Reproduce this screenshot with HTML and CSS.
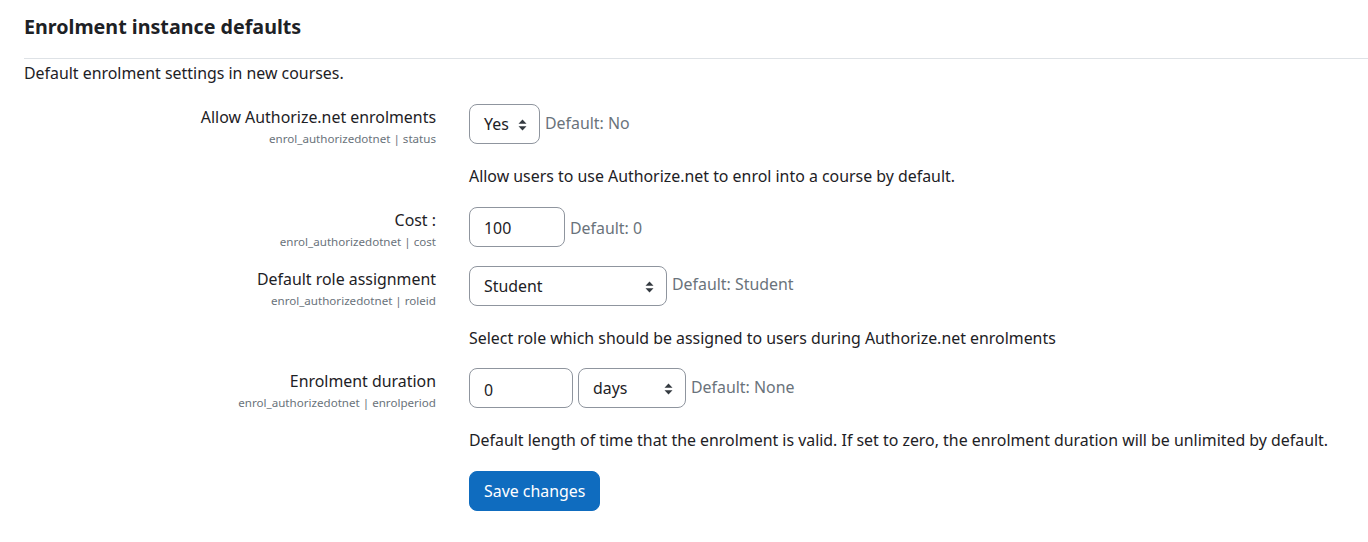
FILE: index.html
```html
<!DOCTYPE html>
<html lang="en">
<head>
    <meta charset="UTF-8">
    <meta name="viewport" content="width=device-width, initial-scale=1.0">
    <title>Enrolment instance defaults</title>
    <link rel="stylesheet" href="styles.css">
</head>
<body>

    <h3 class="section-title">Enrolment instance defaults</h3>
    <div class="section-info">Default enrolment settings in new courses.</div>

    <form class="settings">
        <div class="setting">
            <div class="setting-label">
                <label>Allow Authorize.net enrolments</label>
                <span class="setting-name">enrol_authorizedotnet | status</span>
            </div>
            <div class="setting-body">
                <div class="controls">
                    <div class="custom-select w-yes">Yes
                        <svg class="arrows" width="9" height="12" viewBox="0 0 9 12"><path d="M4.5 0.5 L8.5 4.8 H0.5 Z M4.5 11.5 L8.5 7.2 H0.5 Z" fill="#343a40"/></svg>
                    </div>
                    <span class="default-info after-select">Default: No</span>
                </div>
                <div class="setting-desc">Allow users to use Authorize.net to enrol into a course by default.</div>
            </div>
        </div>

        <div class="setting">
            <div class="setting-label">
                <label>Cost :</label>
                <span class="setting-name">enrol_authorizedotnet | cost</span>
            </div>
            <div class="setting-body">
                <div class="controls">
                    <div class="text-input w-cost">100</div>
                    <span class="default-info after-input">Default: 0</span>
                </div>
            </div>
        </div>

        <div class="setting">
            <div class="setting-label">
                <label>Default role assignment</label>
                <span class="setting-name">enrol_authorizedotnet | roleid</span>
            </div>
            <div class="setting-body">
                <div class="controls">
                    <div class="custom-select w-role">Student
                        <svg class="arrows" width="9" height="12" viewBox="0 0 9 12"><path d="M4.5 0.5 L8.5 4.8 H0.5 Z M4.5 11.5 L8.5 7.2 H0.5 Z" fill="#343a40"/></svg>
                    </div>
                    <span class="default-info after-select">Default: Student</span>
                </div>
                <div class="setting-desc">Select role which should be assigned to users during Authorize.net enrolments</div>
            </div>
        </div>

        <div class="setting">
            <div class="setting-label">
                <label>Enrolment duration</label>
                <span class="setting-name">enrol_authorizedotnet | enrolperiod</span>
            </div>
            <div class="setting-body">
                <div class="controls">
                    <div class="text-input w-period">0</div>
                    <div class="custom-select w-unit">days
                        <svg class="arrows" width="9" height="12" viewBox="0 0 9 12"><path d="M4.5 0.5 L8.5 4.8 H0.5 Z M4.5 11.5 L8.5 7.2 H0.5 Z" fill="#343a40"/></svg>
                    </div>
                    <span class="default-info after-select">Default: None</span>
                </div>
                <div class="setting-desc">Default length of time that the enrolment is valid. If set to zero, the enrolment duration will be unlimited by default.</div>
            </div>
        </div>

        <div class="setting">
            <div class="setting-label"></div>
            <div class="setting-body">
                <button type="button" class="btn-primary">Save changes</button>
            </div>
        </div>
    </form>

</body>
</html>
```

FILE: styles.css
```css
body {
    margin: 0;
    padding: 0 0 0 24px;
    font-family: "Noto Sans", "Open Sans", sans-serif;
    font-size: 15.9px;
    line-height: 22px;
    color: #1d2125;
    background: #fff;
}
.section-title {
    font-size: 19.7px;
    font-weight: 700;
    line-height: 26px;
    margin: 0;
    padding: 14px 0 18px;
    border-bottom: 1px solid #dee2e6;
}
.section-info {
    margin: 3px 0 0;
}
.settings {
    margin-top: 20px;
}
.setting {
    display: grid;
    grid-template-columns: 412px 1fr;
    column-gap: 33px;
    margin-bottom: 19px;
}
.setting-label {
    text-align: right;
    padding-top: 2px;
    height: 38px;
}
.setting-label label {
    display: block;
}
.setting-name {
    display: block;
    margin-top: 3px;
    font-size: 11.6px;
    line-height: 16px;
    color: #6a737b;
}
.controls {
    display: flex;
    align-items: center;
    gap: 5px;
}
.custom-select,
.text-input {
    box-sizing: border-box;
    height: 40px;
    border: 1px solid #8f959e;
    border-radius: 8px;
    padding: 0 14px;
    display: flex;
    align-items: center;
    color: #1d2125;
    position: relative;
}
.text-input {
    padding-top: 3px;
}
.custom-select .arrows {
    position: absolute;
    right: 12px;
    top: 14px;
}
.default-info {
    color: #6a737b;
}
.after-select {
    margin-bottom: 3px;
}
.after-input {
    margin-top: 3px;
}
.w-yes { width: 71px; }
.w-cost { width: 96px; }
.w-role { width: 198px; }
.w-period { width: 104px; }
.w-unit { width: 108px; }
.setting-desc {
    margin-top: 21px;
    line-height: 22.5px;
}
.btn-primary {
    font-family: inherit;
    font-size: 15.9px;
    line-height: 22px;
    color: #fff;
    background: #0f6cbf;
    border: 1px solid #0f6cbf;
    border-radius: 8px;
    height: 40px;
    padding: 0 14px;
}
```
